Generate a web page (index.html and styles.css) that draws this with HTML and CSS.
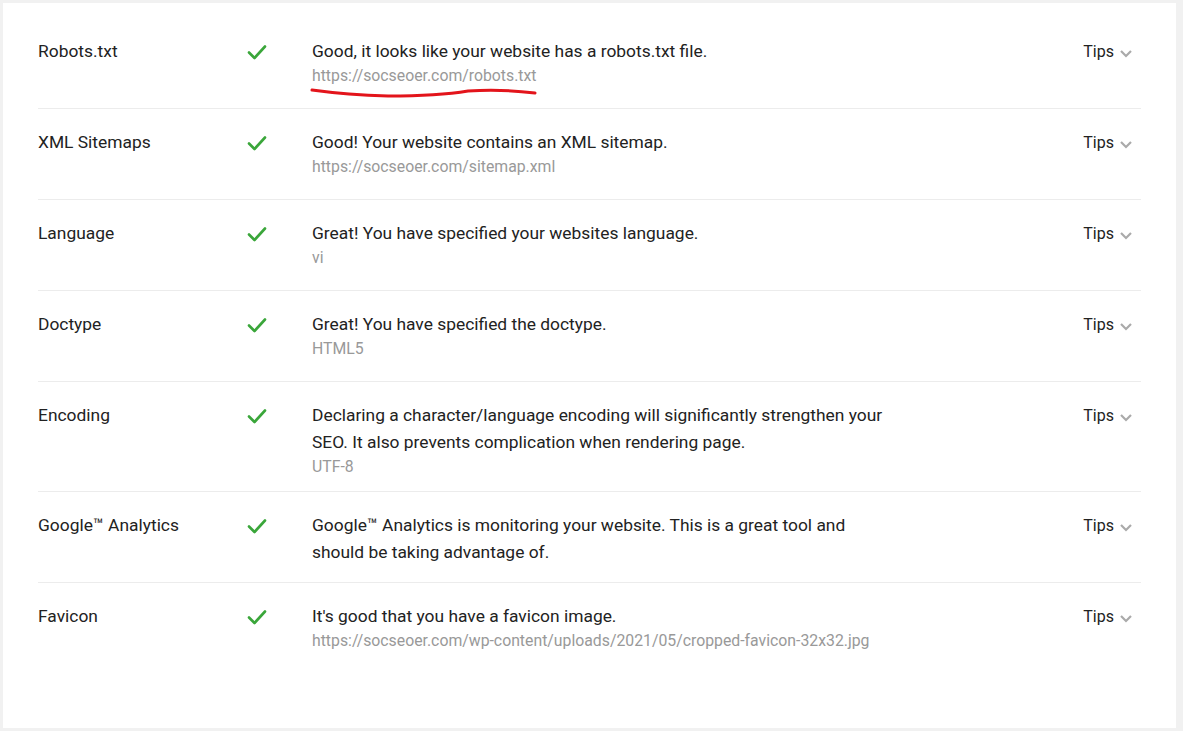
FILE: index.html
```html
<!DOCTYPE html>
<html lang="en">
<head>
<meta charset="utf-8">
<title>SEO checks</title>
<link rel="stylesheet" href="styles.css">
</head>
<body>
<div class="card">
  <div class="row">
    <div class="label">Robots.txt</div>
    <div class="icon"><svg width="20" height="16" viewBox="0 0 20 16"><path d="M2 8.5 L7.5 14 L18 2.5" fill="none" stroke="#3aa63a" stroke-width="2.6" stroke-linecap="round" stroke-linejoin="round"/></svg></div>
    <div class="msg">
      <div class="title">Good, it looks like your website has a robots.txt file.</div>
      <div class="sub">https://socseoer.com/robots.txt</div>
      <svg class="scribble" width="240" height="16" viewBox="0 0 240 16"><path d="M2 5 Q 38 10 78 11 Q 128 11 158 6 Q 193 4 225 8" fill="none" stroke="#e3141b" stroke-width="3" stroke-linecap="round"/></svg>
    </div>
    <div class="tips">Tips <svg width="14" height="9" viewBox="0 0 14 9"><path d="M2 2 L7 7 L12 2" fill="none" stroke="#aaa" stroke-width="2.2"/></svg></div>
  </div>
  <div class="row">
    <div class="label">XML Sitemaps</div>
    <div class="icon"><svg width="20" height="16" viewBox="0 0 20 16"><path d="M2 8.5 L7.5 14 L18 2.5" fill="none" stroke="#3aa63a" stroke-width="2.6" stroke-linecap="round" stroke-linejoin="round"/></svg></div>
    <div class="msg">
      <div class="title">Good! Your website contains an XML sitemap.</div>
      <div class="sub">https://socseoer.com/sitemap.xml</div>
    </div>
    <div class="tips">Tips <svg width="14" height="9" viewBox="0 0 14 9"><path d="M2 2 L7 7 L12 2" fill="none" stroke="#aaa" stroke-width="2.2"/></svg></div>
  </div>
  <div class="row">
    <div class="label">Language</div>
    <div class="icon"><svg width="20" height="16" viewBox="0 0 20 16"><path d="M2 8.5 L7.5 14 L18 2.5" fill="none" stroke="#3aa63a" stroke-width="2.6" stroke-linecap="round" stroke-linejoin="round"/></svg></div>
    <div class="msg">
      <div class="title">Great! You have specified your websites language.</div>
      <div class="sub">vi</div>
    </div>
    <div class="tips">Tips <svg width="14" height="9" viewBox="0 0 14 9"><path d="M2 2 L7 7 L12 2" fill="none" stroke="#aaa" stroke-width="2.2"/></svg></div>
  </div>
  <div class="row">
    <div class="label">Doctype</div>
    <div class="icon"><svg width="20" height="16" viewBox="0 0 20 16"><path d="M2 8.5 L7.5 14 L18 2.5" fill="none" stroke="#3aa63a" stroke-width="2.6" stroke-linecap="round" stroke-linejoin="round"/></svg></div>
    <div class="msg">
      <div class="title">Great! You have specified the doctype.</div>
      <div class="sub">HTML5</div>
    </div>
    <div class="tips">Tips <svg width="14" height="9" viewBox="0 0 14 9"><path d="M2 2 L7 7 L12 2" fill="none" stroke="#aaa" stroke-width="2.2"/></svg></div>
  </div>
  <div class="row">
    <div class="label">Encoding</div>
    <div class="icon"><svg width="20" height="16" viewBox="0 0 20 16"><path d="M2 8.5 L7.5 14 L18 2.5" fill="none" stroke="#3aa63a" stroke-width="2.6" stroke-linecap="round" stroke-linejoin="round"/></svg></div>
    <div class="msg">
      <div class="title">Declaring a character/language encoding will significantly strengthen your SEO. It also prevents complication when rendering page.</div>
      <div class="sub">UTF-8</div>
    </div>
    <div class="tips">Tips <svg width="14" height="9" viewBox="0 0 14 9"><path d="M2 2 L7 7 L12 2" fill="none" stroke="#aaa" stroke-width="2.2"/></svg></div>
  </div>
  <div class="row">
    <div class="label">Google™ Analytics</div>
    <div class="icon"><svg width="20" height="16" viewBox="0 0 20 16"><path d="M2 8.5 L7.5 14 L18 2.5" fill="none" stroke="#3aa63a" stroke-width="2.6" stroke-linecap="round" stroke-linejoin="round"/></svg></div>
    <div class="msg">
      <div class="title">Google™ Analytics is monitoring your website. This is a great tool and should be taking advantage of.</div>
    </div>
    <div class="tips">Tips <svg width="14" height="9" viewBox="0 0 14 9"><path d="M2 2 L7 7 L12 2" fill="none" stroke="#aaa" stroke-width="2.2"/></svg></div>
  </div>
  <div class="row last">
    <div class="label">Favicon</div>
    <div class="icon"><svg width="20" height="16" viewBox="0 0 20 16"><path d="M2 8.5 L7.5 14 L18 2.5" fill="none" stroke="#3aa63a" stroke-width="2.6" stroke-linecap="round" stroke-linejoin="round"/></svg></div>
    <div class="msg">
      <div class="title">It's good that you have a favicon image.</div>
      <div class="sub">https://socseoer.com/wp-content/uploads/2021/05/cropped-favicon-32x32.jpg</div>
    </div>
    <div class="tips">Tips <svg width="14" height="9" viewBox="0 0 14 9"><path d="M2 2 L7 7 L12 2" fill="none" stroke="#aaa" stroke-width="2.2"/></svg></div>
  </div>
</div>
</body>
</html>
```
FILE: styles.css
```css
html, body {
  margin: 0;
  padding: 0;
  background: #f1f1f1;
}
body {
  padding: 3px 7px 3px 3px;
  font-family: Roboto, "Liberation Sans", Arial, sans-serif;
  color: #222;
}
.card {
  background: #fff;
  padding: 15px 35px 55px 35px;
  height: 725px;
  box-sizing: border-box;
}
.row {
  display: grid;
  grid-template-columns: 209px 65px 1fr auto;
  align-items: start;
  padding: 20px 8px 13px 0;
  min-height: 91px;
  box-sizing: border-box;
  border-bottom: 1px solid #ececec;
}
.row.last {
  border-bottom: none;
}
.label {
  font-size: 17.4px;
  line-height: 27px;
}
.icon {
  height: 27px;
  display: flex;
  align-items: center;
}
.msg {
  position: relative;
}
.title {
  font-size: 17.4px;
  line-height: 27px;
  max-width: 580px;
}
.sub {
  font-size: 15.8px;
  line-height: 22px;
  color: #999;
}
.scribble {
  position: absolute;
  left: -2px;
  top: 47px;
}
.tips {
  font-size: 16px;
  line-height: 27px;
  display: flex;
  align-items: center;
  gap: 5px;
}
.tips svg {
  margin-top: 3px;
}
```
